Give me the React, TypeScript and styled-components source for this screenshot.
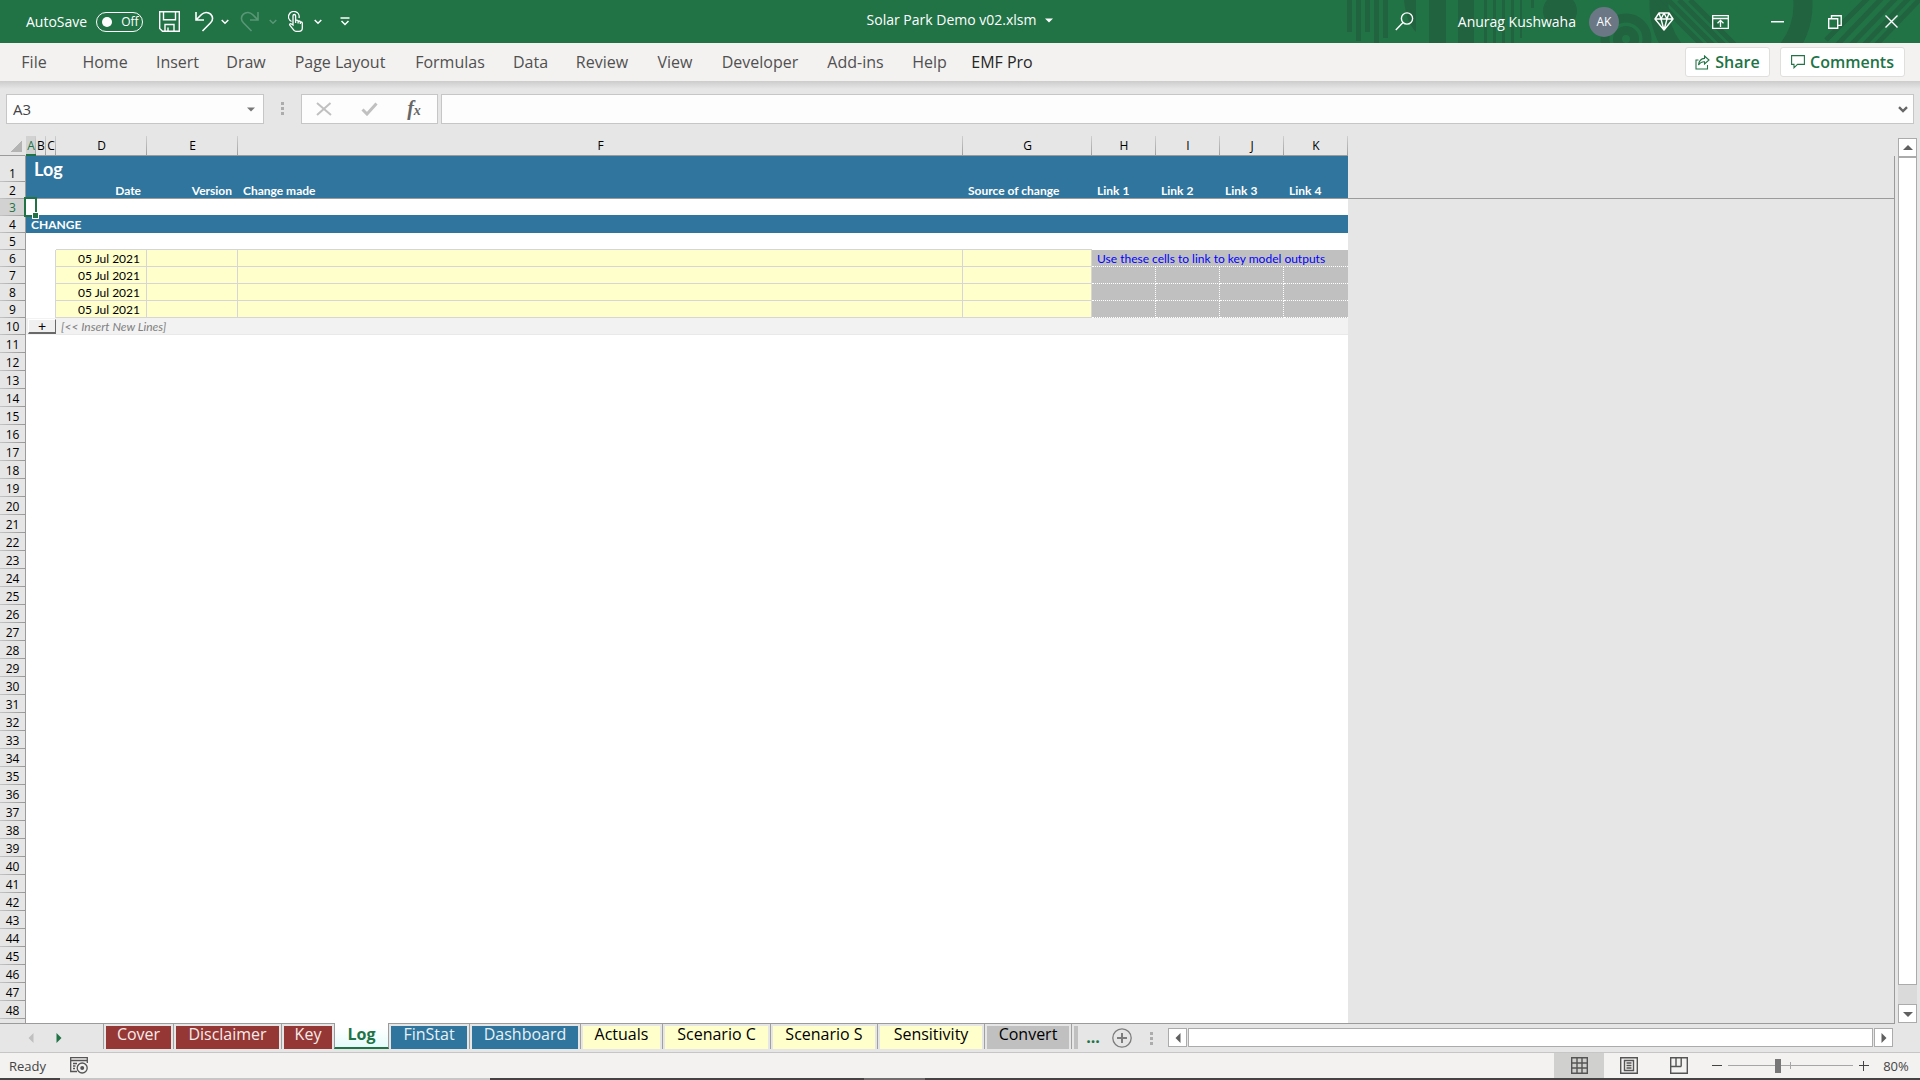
import React from "react";
import styled, { createGlobalStyle, css } from "styled-components";

const UI = `"Open Sans", "Noto Sans", "Liberation Sans", sans-serif`;
const CELL = `Lato, "Open Sans", "Liberation Sans", sans-serif`;
const GREEN = "#217346";
const BLUE = "#2f759d";
const LINE = "#9b9b9b";

const GlobalStyle = createGlobalStyle`
  *, *::before, *::after { box-sizing: border-box; }
  body { margin: 0; font-family: ${UI}; color: #444; }
  button, input { font-family: inherit; font-size: inherit; color: inherit; }
  button { margin: 0; padding: 0; border: 0; background: none; }
  svg { flex: none; }
`;

const Window = styled.div`
  display: flex;
  flex-direction: column;
  height: 100vh;
  overflow: hidden;
  background: #e6e6e6;
`;

/* ---------- title bar ---------- */
const TitleBar = styled.header`
  position: relative;
  display: grid;
  grid-template-columns: 1fr auto 1fr;
  flex: none;
  height: 43px;
  background: ${GREEN};
  color: #fff;
  font-size: 14px;
  line-height: 20px;
`;
const Pattern = styled.svg`
  position: absolute;
  top: 0;
  right: 0;
`;
const QuickAccess = styled.div`
  display: flex;
  align-items: center;
  padding-left: 26px;
`;
const AutoSave = styled.label`
  display: flex;
  align-items: center;
  gap: 9px;
  height: 40px;
  margin-right: 8px;
`;
const Switch = styled.span`
  display: flex;
  align-items: center;
  gap: 9px;
  width: 47px;
  height: 20px;
  padding-left: 5px;
  border: 1px solid #fff;
  border-radius: 10px;
  font-size: 12px;
`;
const Knob = styled.input`
  appearance: none;
  flex: none;
  width: 10px;
  height: 10px;
  margin: 0;
  border-radius: 50%;
  background: #fff;
`;
const QuickButton = styled.button<{ $w: number; $dim?: boolean }>`
  display: flex;
  align-items: center;
  justify-content: center;
  width: ${(p) => p.$w}px;
  height: 43px;
  opacity: ${(p) => (p.$dim ? 0.25 : 1)};
`;
const DocTitle = styled.button`
  display: flex;
  align-items: center;
  gap: 9px;
  height: 39px;
`;
const Account = styled.div`
  position: relative;
  display: flex;
  align-items: center;
  justify-content: flex-end;
`;
const UserName = styled.span`
  margin: 0 13px 0 34px;
`;
const Avatar = styled.span`
  width: 30px;
  height: 30px;
  margin-right: 16px;
  border-radius: 50%;
  background: #6b7785;
  font-size: 12px;
  line-height: 30px;
  text-align: center;
`;
const WindowButton = styled.button`
  display: flex;
  align-items: center;
  justify-content: center;
  width: 57px;
  height: 43px;
`;

/* ---------- ribbon ---------- */
const Ribbon = styled.nav`
  display: flex;
  align-items: center;
  flex: none;
  height: 38px;
  padding-right: 15px;
  background: #f3f2f1;
`;
const RibbonTab = styled.button<{ $w: number; $dark?: boolean }>`
  width: ${(p) => p.$w}px;
  height: 38px;
  font-size: 16px;
  line-height: 38px;
  white-space: nowrap;
  color: ${(p) => (p.$dark ? "#262626" : "#505050")};
`;
const RibbonActions = styled.div`
  display: flex;
  gap: 10px;
  margin-left: auto;
`;
const ActionButton = styled.button<{ $w: number }>`
  display: flex;
  align-items: center;
  justify-content: center;
  gap: 5px;
  width: ${(p) => p.$w}px;
  height: 30px;
  border: 1px solid #e1dfdd;
  border-radius: 3px;
  background: #fff;
  color: ${GREEN};
  font-size: 16px;
  font-weight: 600;
`;

/* ---------- formula bar ---------- */
const FormulaBar = styled.div`
  display: flex;
  align-items: flex-start;
  flex: none;
  height: 55px;
  padding: 13px 6px 0;
  background: linear-gradient(#cccccc, #e6e6e6 8px);
`;
const Box = styled.div<{ $w?: number }>`
  display: flex;
  align-items: center;
  flex: ${(p) => (p.$w ? "none" : "1")};
  width: ${(p) => (p.$w ? `${p.$w}px` : "auto")};
  height: 30px;
  border: 1px solid #c6c6c6;
  background: #fdfdfd;
`;
const BoxInput = styled.input`
  flex: 1;
  min-width: 0;
  height: 28px;
  padding: 0 6px;
  border: 0;
  outline: 0;
  background: transparent;
  font-size: 15px;
`;
const BoxButton = styled.button<{ $w: number }>`
  display: flex;
  align-items: center;
  justify-content: center;
  width: ${(p) => p.$w}px;
  height: 28px;
`;
const FxMark = styled.span`
  color: #666;
  font-family: "Liberation Serif", serif;
  font-size: 20px;
  font-style: italic;
  font-weight: 700;
  line-height: 24px;
  small { font-size: 14px; }
`;
const Grip = styled.span<{ $w: number }>`
  display: flex;
  flex-direction: column;
  align-items: center;
  align-self: flex-start;
  gap: 2px;
  width: ${(p) => p.$w}px;
  padding-top: 8px;
  &::before, &::after { content: ""; }
  &::before, &::after, & > i {
    width: 3px;
    height: 3px;
    background: #acacac;
  }
`;
const Spacer = styled.span`
  width: 3px;
`;

/* ---------- sheet ---------- */
const SheetArea = styled.main`
  display: flex;
  flex: 1;
  min-height: 0;
`;
const SheetPane = styled.div`
  flex: 1;
  min-width: 0;
  overflow: hidden;
  border-bottom: 1px solid ${LINE};
`;
const Sheet = styled.table`
  width: 100%;
  table-layout: fixed;
  border-collapse: separate;
  border-spacing: 0;
  font-family: ${CELL};
  font-size: 12px;
  line-height: 16px;
  color: #000;
  td, th { padding: 0; white-space: nowrap; }
`;
const Row = styled.tr<{ $h: number }>`
  height: ${(p) => p.$h}px;
`;
const Corner = styled.th`
  border-right: 1px solid transparent;
  border-bottom: 1px solid ${LINE};
  background: linear-gradient(135deg, transparent 50%, #b4b4b4 50%) 10px 4px / 12px 12px no-repeat;
`;
const ColHead = styled.th<{ $on?: boolean }>`
  border-bottom: 1px solid ${(p) => (p.$on ? GREEN : LINE)};
  background:
    linear-gradient(${GREEN}, ${GREEN}) bottom / ${(p) => (p.$on ? "100% 1px" : "0 0")} no-repeat,
    linear-gradient(#cfcfcf, #a0a0a0) right / 1px 100% no-repeat
    ${(p) => (p.$on ? "#d2d2d2" : "#e6e6e6")};
  color: ${(p) => (p.$on ? GREEN : "#000")};
  font-family: ${UI};
  font-size: 12px;
  font-weight: 400;
`;
const BlankHead = styled.td<{ $edge?: boolean }>`
  border-bottom: ${(p) => (p.$edge ? `1px solid ${LINE}` : "0")};
  border-right: 1px solid ${LINE};
`;
const RowHead = styled.th<{ $on?: boolean }>`
  border-right: 1px solid ${LINE};
  background: linear-gradient(90deg, #c4c4c4, #989898) bottom / 100% 1px no-repeat
    ${(p) => (p.$on ? "#d2d2d2" : "#e6e6e6")};
  color: ${(p) => (p.$on ? GREEN : "#000")};
  font-family: ${UI};
  font-size: 12px;
  font-weight: 400;
  line-height: 17px;
  vertical-align: bottom;
`;
const Cell = styled.td<{ $bg?: string; $line?: string }>`
  position: relative;
  background: ${(p) => p.$bg || "#fff"};
  ${(p) => p.$line && css`border-bottom: 1px solid ${p.$line};`}
`;
const Heading = styled(Cell)`
  color: #fff;
  font-weight: 700;
  text-align: left;
  vertical-align: bottom;
`;
const Label = styled.div<{ $end?: boolean }>`
  height: 15px;
  padding: 0 6px 0 5px;
  text-align: ${(p) => (p.$end ? "right" : "left")};
`;
const SheetTitle = styled.div`
  padding-left: 8px;
  font-size: 18px;
  line-height: 25px;
`;
const lowText = css`
  && { padding-top: 2px; }
  line-height: 14px;
`;
const Entry = styled(Cell)`
  border-right: 1px solid #d6d6d6;
  border-bottom: 1px solid #d6d6d6;
  background: #ffffcc;
  text-align: right;
  ${lowText}
  && { padding-right: 6px; }
`;
const EntryEdge = styled(Cell)<{ $side?: boolean }>`
  border-right: ${(p) => (p.$side ? "1px solid #d6d6d6" : "0")};
  border-bottom: ${(p) => (p.$side ? "0" : "1px solid #d6d6d6")};
`;
const LinkCell = styled(Cell)<{ $last?: boolean }>`
  border-right: ${(p) => (p.$last ? "0" : "1px dotted #fff")};
  border-bottom: 1px dotted #fff;
  background: #c0c0c0;
  color: #0000ff;
  ${lowText}
  && { padding-left: 5px; }
`;
const Note = styled(Cell)`
  border-bottom: 1px solid #e9e9e9;
  color: #808080;
  font-style: italic;
  ${lowText}
  && { padding-left: 5px; }
`;
const InsertButton = styled.button`
  display: block;
  width: 28px;
  height: 15px;
  margin-left: 2px;
  border: 1px solid;
  border-color: #fff #696969 #696969 #fff;
  border-bottom-width: 2px;
  background: #f0f0f0;
  color: #000;
  font-size: 14px;
  line-height: 12px;
`;
const Selection = styled.div`
  position: absolute;
  z-index: 1;
  top: -2px;
  left: -2px;
  width: 13px;
  height: 20px;
  border: 2px solid ${GREEN};
  &::after {
    content: "";
    position: absolute;
    right: -4px;
    bottom: -4px;
    width: 7px;
    height: 7px;
    border: 1px solid #fff;
    background: ${GREEN};
  }
`;

/* ---------- scroll bars ---------- */
const VScroll = styled.div`
  display: flex;
  flex-direction: column;
  width: 25px;
  padding: 2px 3px 1px;
`;
const ScrollButton = styled.button`
  display: flex;
  align-items: center;
  justify-content: center;
  flex: none;
  width: 19px;
  height: 19px;
  border: 1px solid #ababab;
  background: #fff;
`;
const VTrack = styled.div`
  flex: 1;
  padding-bottom: 19px;
  background: #dadada;
`;
const Thumb = styled.div`
  height: 100%;
  border: 1px solid #ababab;
  background: #fff;
`;
const HScroll = styled.div`
  display: flex;
  flex: 1;
  gap: 1px;
  height: 19px;
  margin: 4px 27px 0 0;
`;
const HTrack = styled.div`
  flex: 1;
`;

/* ---------- sheet tabs ---------- */
const TabBar = styled.div`
  display: flex;
  align-items: flex-start;
  flex: none;
  height: 29px;
  border-bottom: 1px solid #c6c6c6;
`;
const TabNav = styled.div`
  display: flex;
  flex: none;
  width: 103px;
  height: 28px;
  padding-left: 26px;
`;
const NavButton = styled.button`
  display: flex;
  align-items: center;
  width: 17px;
  height: 28px;
  margin-right: 11px;
`;
const TabSlot = styled.div<{ $bare?: boolean }>`
  padding: 2px 2px 0;
  border-left: ${(p) => (p.$bare ? "0" : "1px solid #a0a0a0")};
`;
const SheetTab = styled.button<{ $w: number; $bg: string; $fg: string }>`
  display: block;
  width: ${(p) => p.$w}px;
  height: 23px;
  background: ${(p) => p.$bg};
  color: ${(p) => p.$fg};
  font-size: 16px;
  line-height: 16px;
  padding-bottom: 7px;
`;
const ActiveTab = styled.button`
  position: relative;
  width: 55px;
  height: 26px;
  margin-top: -1px;
  padding-bottom: 3px;
  border: 1px solid ${LINE};
  border-top: 0;
  border-bottom: 2px solid ${GREEN};
  background: linear-gradient(#fff 20%, #e4fbfa);
  color: ${GREEN};
  font-size: 16px;
  font-weight: 700;
  line-height: 20px;
`;
const MoreTabs = styled.button`
  width: 26px;
  height: 26px;
  color: ${GREEN};
  font-size: 16px;
  font-weight: 700;
`;
const AddSheet = styled.button`
  display: flex;
  align-items: center;
  justify-content: center;
  width: 24px;
  height: 28px;
  margin-left: 4px;
`;

/* ---------- status bar ---------- */
const StatusBar = styled.footer`
  display: flex;
  align-items: center;
  flex: none;
  height: 27px;
  padding: 0 0 2px 9px;
  background:
    linear-gradient(90deg, #444 60px, #c6c6c6 60px, #c6c6c6 490px, #444 490px, #444 864px, #6e6e6e 864px, #6e6e6e 925px, #444 925px)
      bottom / 100% 2px no-repeat
    #f3f2f1;
  font-size: 13px;
`;
const StatusText = styled.span`
  width: 61px;
`;
const ViewButton = styled.button<{ $on?: boolean }>`
  display: flex;
  align-items: center;
  justify-content: center;
  width: 50px;
  height: 25px;
  background: ${(p) => (p.$on ? "#d0d0ce" : "transparent")};
`;
const Views = styled.div`
  display: flex;
  margin: 0 2px 0 auto;
`;
const ZoomButton = styled.button`
  display: flex;
  align-items: center;
  justify-content: center;
  width: 22px;
  height: 25px;
`;
const ZoomSlider = styled.input`
  appearance: none;
  width: 125px;
  height: 15px;
  margin: 0;
  background:
    linear-gradient(#a6a6a6, #a6a6a6) 0 7px / 100% 1px no-repeat,
    linear-gradient(#a6a6a6, #a6a6a6) 62px 4px / 1px 7px no-repeat;
  &::-webkit-slider-thumb {
    appearance: none;
    width: 6px;
    height: 14px;
    background: #777;
  }
`;
const ZoomValue = styled.button`
  width: 42px;
  margin-right: 3px;
`;

const Chevron = () => (
  <svg width="8" height="6" viewBox="0 0 8 6" fill="none" stroke="currentColor" strokeWidth="1.5">
    <path d="M.7 1 4 4.3 7.3 1" />
  </svg>
);

type Dir = "up" | "down" | "left" | "right";
const arrows: Record<Dir, string> = {
  up: "M0 7h10L5 2z",
  down: "M0 3h10L5 8z",
  left: "M7.500 0v10l-5-5z",
  right: "M2.500 0v10l5-5z",
};
const Arrow = ({ dir, color = "#606060", size = 10 }: { dir: Dir; color?: string; size?: number }) => (
  <svg width={size} height={size} viewBox="0 0 10 10" fill={color}>
    <path d={arrows[dir]} />
  </svg>
);

const TitlePattern = () => (
  <Pattern width="590" height="43" viewBox="1330 0 590 43" fill="#21633f" aria-hidden="true">
    <path d="M1347 0h5v32h-5zM1356 0h5v41h-5zM1365 0h5v32h-5zM1374 0h5v43h-5zM1383 0h5v38h-5z" />
    <path d="M1404 0h12v32q-10-10-12-32zM1429 0h17v43h-17zM1458 0h16v43h-16z" />
    <path d="M1484 0h3v43h-3zM1493 0h3v43h-3zM1502 0h3v43h-3zM1511 0h3v43h-3zM1520 0h2v38h-2zM1531 0h3v8h-3z" />
    <circle cx="1560" cy="11" r="17" />
    <g fill="none" stroke="#21633f">
      <circle cx="1626" cy="39" r="21" strokeWidth="9" />
      <circle cx="1626" cy="39" r="8.500" strokeWidth="9" />
      <circle cx="1731" cy="5" r="72" strokeWidth="19" />
      <path
        strokeWidth="5"
        d="M1668 0l46 46M1679 0l46 46M1690 0l46 46M1657 0l46 46M1826 40l43-43M1836 46l47-49M1848 48l49-51M1861 48l49-51M1873 48l49-51"
      />
    </g>
  </Pattern>
);

const ribbonTabs: [string, number][] = [
  ["File", 68], ["Home", 74], ["Insert", 71], ["Draw", 66], ["Page Layout", 122],
  ["Formulas", 98], ["Data", 63], ["Review", 80], ["View", 66], ["Developer", 104],
  ["Add-ins", 87], ["Help", 61], ["EMF Pro", 84],
];

const columns: [string, number][] = [
  ["A", 10], ["B", 10], ["C", 10], ["D", 91], ["E", 91], ["F", 725],
  ["G", 129], ["H", 64], ["I", 64], ["J", 64], ["K", 64],
];

const RED = "#953735";
const CREAM = "#ffffcc";
const leftTabs: [string, number][] = [["Cover", 65], ["Disclaimer", 103], ["Key", 48]];
const rightTabs: [string, number, string, string][] = [
  ["FinStat", 76, BLUE, "#e8f1f7"],
  ["Dashboard", 106, BLUE, "#e8f1f7"],
  ["Actuals", 77, CREAM, "#000"],
  ["Scenario C", 103, CREAM, "#000"],
  ["Scenario S", 102, CREAM, "#000"],
  ["Sensitivity", 102, CREAM, "#000"],
  ["Convert", 82, "#c0c0c0", "#000"],
];

const entryRows = [6, 7, 8, 9];
const emptyRows = Array.from({ length: 38 }, (_, i) => i + 11);

export default function App() {
  return (
    <Window>
      <GlobalStyle />
      <TitleBar>
        <TitlePattern />
        <QuickAccess>
          <AutoSave>
            AutoSave
            <Switch>
              <Knob type="checkbox" />
              Off
            </Switch>
          </AutoSave>
          <QuickButton $w={36} aria-label="Save">
            <svg width="21" height="21" viewBox="0 0 21 21" fill="none" stroke="#fff" strokeWidth="1.4">
              <path d="M.7.7h19.600v19.600H3.500L.7 17.500zM4.500.7v8h12v-8M6 20v-6.500h9V20M9 20v-3.500" />
            </svg>
          </QuickButton>
          <QuickButton $w={34} aria-label="Undo">
            <svg width="19" height="21" viewBox="0 0 19 21" fill="none" stroke="#fff" strokeWidth="1.600">
              <path d="M1 1v8h8M1.500 8.500 6.500 3.500C9 1 13 .7 15.600 3.200s2.600 5.800 0 8.500L7.500 20" />
            </svg>
          </QuickButton>
          <QuickButton $w={8} aria-label="Undo history"><Chevron /></QuickButton>
          <QuickButton $w={40} $dim aria-label="Redo">
            <svg width="19" height="21" viewBox="0 0 19 21" fill="none" stroke="#fff" strokeWidth="1.600">
              <path d="M18 1v8h-8M17.500 8.500 12.500 3.500C10 1 6 .7 3.400 3.200s-2.600 5.800 0 8.500L11.500 20" />
            </svg>
          </QuickButton>
          <QuickButton $w={8} $dim aria-label="Redo history"><Chevron /></QuickButton>
          <QuickButton $w={37} aria-label="Touch or mouse mode">
            <svg width="16" height="21" viewBox="0 0 16 21" fill="none" stroke="#fff" strokeWidth="1.300">
              <path d="M3.500 10.500A5.300 5.300 0 1 1 11 7M5 9V4.800a1.300 1.300 0 0 1 2.600 0V10M5 9v5l-2-1.200c-1-.4-1.800.8-1 1.600l4 5c.6.7 1 .9 2 .9h3c2 0 3.300-1.400 3.300-3.400v-5c0-1.200-2-1.200-2 0v-1c0-1.200-2.200-1.200-2.200 0V10c0-1.200-2.500-1.200-2.500 0v2M10.100 10v2.500M12.300 11v2" />
            </svg>
          </QuickButton>
          <QuickButton $w={8} aria-label="Touch options"><Chevron /></QuickButton>
          <QuickButton $w={46} aria-label="Customize toolbar">
            <svg width="10" height="9" viewBox="0 0 10 9" fill="none" stroke="#fff" strokeWidth="1.500">
              <path d="M.5 1h9M1.500 4 5 7.500 8.500 4" />
            </svg>
          </QuickButton>
        </QuickAccess>
        <DocTitle>
          Solar Park Demo v02.xlsm
          <Arrow dir="down" color="#fff" size={8} />
        </DocTitle>
        <Account>
          <QuickButton $w={38} aria-label="Search">
            <svg width="19" height="19" viewBox="0 0 19 19" fill="none" stroke="#fff" strokeWidth="1.400">
              <circle cx="12" cy="6.500" r="5.600" />
              <path d="M8 10.500.8 18" />
            </svg>
          </QuickButton>
          <UserName>Anurag Kushwaha</UserName>
          <Avatar>AK</Avatar>
          <WindowButton aria-label="Premium">
            <svg width="20" height="19" viewBox="0 0 20 19" fill="none" stroke="#fff" strokeWidth="1.400" strokeLinejoin="round">
              <path d="M5 1h10l4 6-9 11L1 7zM1 7h18M5 1l2 6 3 11 3-11 2-6M7 7l3-6 3 6" />
            </svg>
          </WindowButton>
          <WindowButton aria-label="Ribbon display options">
            <svg width="17" height="14" viewBox="0 0 17 14" fill="none" stroke="#fff" strokeWidth="1.300">
              <path d="M.7.7h15.600v12.600H.7zM.7 3.500h15.600M8.500 12V5.500M5.500 8.300l3-2.900 3 2.900" />
            </svg>
          </WindowButton>
          <WindowButton aria-label="Minimize">
            <svg width="13" height="2"><rect width="13" height="1.500" fill="#fff" /></svg>
          </WindowButton>
          <WindowButton aria-label="Restore">
            <svg width="14" height="14" viewBox="0 0 14 14" fill="none" stroke="#fff" strokeWidth="1.400">
              <path d="M.7 3.700h9v9.500h-9zM3.500 3.700V.8h9.700v9.600H9.700" />
            </svg>
          </WindowButton>
          <WindowButton aria-label="Close">
            <svg width="13" height="13" viewBox="0 0 13 13" stroke="#fff" strokeWidth="1.400">
              <path d="M.5.5l12 12M12.500.5l-12 12" />
            </svg>
          </WindowButton>
        </Account>
      </TitleBar>

      <Ribbon>
        {ribbonTabs.map(([name, w]) => (
          <RibbonTab key={name} $w={w} $dark={name === "EMF Pro"}>{name}</RibbonTab>
        ))}
        <RibbonActions>
          <ActionButton $w={85}>
            <svg width="15" height="15" viewBox="0 0 15 15" fill="none" stroke={GREEN} strokeWidth="1.100">
              <path d="M3.500 5H1v9h11.500v-4M9.500 1l4.500 4-4.500 4V6.700C7 6.500 5 7.500 3.500 10 4 6 6 3.600 9.500 3.400z" />
            </svg>
            Share
          </ActionButton>
          <ActionButton $w={125}>
            <svg width="14" height="14" viewBox="0 0 14 14" fill="none" stroke={GREEN} strokeWidth="1.100">
              <path d="M.6.6h12.800v8.800H6.500L3 12.800V9.400H.6z" />
            </svg>
            Comments
          </ActionButton>
        </RibbonActions>
      </Ribbon>

      <FormulaBar>
        <Box $w={258}>
          <BoxInput aria-label="Name box" defaultValue="A3" />
          <BoxButton $w={24} aria-label="Names"><Arrow dir="down" color="#777" size={8} /></BoxButton>
        </Box>
        <Grip $w={37}><i /></Grip>
        <Box $w={137}>
          <BoxButton $w={44} aria-label="Cancel">
            <svg width="16" height="14" viewBox="0 0 16 14" stroke="#c0c0c0" strokeWidth="2">
              <path d="M1 1l14 12M14.500 1 1 13" />
            </svg>
          </BoxButton>
          <BoxButton $w={46} aria-label="Enter">
            <svg width="17" height="14" viewBox="0 0 17 14" fill="none" stroke="#c0c0c0" strokeWidth="3">
              <path d="M1.500 7.500 6 12 15.500 1.500" />
            </svg>
          </BoxButton>
          <BoxButton $w={44} aria-label="Insert function">
            <FxMark>f<small>x</small></FxMark>
          </BoxButton>
        </Box>
        <Spacer />
        <Box>
          <BoxInput aria-label="Formula" />
          <BoxButton $w={20} aria-label="Expand formula bar">
            <svg width="10" height="7" viewBox="0 0 10 7" fill="none" stroke="#666" strokeWidth="2.400">
              <path d="M1 1.200 5 5l4-3.800" />
            </svg>
          </BoxButton>
        </Box>
      </FormulaBar>

      <SheetArea>
        <SheetPane>
          <Sheet>
            <colgroup>
              <col width="26" />
              {columns.map(([c, w]) => <col key={c} width={w} />)}
              <col />
            </colgroup>
            <thead>
              <Row $h={20}>
                <Corner aria-label="Select all" />
                {columns.map(([c]) => <ColHead key={c} $on={c === "A"}>{c}</ColHead>)}
                <td />
              </Row>
            </thead>
            <tbody>
              <Row $h={26}>
                <RowHead>1</RowHead>
                <Heading $bg={BLUE} colSpan={11}><SheetTitle>Log</SheetTitle></Heading>
                <BlankHead />
              </Row>
              <Row $h={17}>
                <RowHead>2</RowHead>
                <Heading $bg={BLUE} $line={LINE} colSpan={3} />
                <Heading $bg={BLUE} $line={LINE}><Label $end>Date</Label></Heading>
                <Heading $bg={BLUE} $line={LINE}><Label $end>Version</Label></Heading>
                <Heading $bg={BLUE} $line={LINE}><Label>Change made</Label></Heading>
                <Heading $bg={BLUE} $line={LINE}><Label>Source of change</Label></Heading>
                {[1, 2, 3, 4].map((n) => (
                  <Heading key={n} $bg={BLUE} $line={LINE}><Label>Link {n}</Label></Heading>
                ))}
                <BlankHead $edge />
              </Row>
              <Row $h={17}>
                <RowHead $on>3</RowHead>
                <Cell $line={BLUE}><Selection /></Cell>
                <Cell $line={BLUE} colSpan={10} />
                <BlankHead />
              </Row>
              <Row $h={17}>
                <RowHead>4</RowHead>
                <Heading $bg={BLUE} $line={BLUE} colSpan={11}><Label>CHANGE</Label></Heading>
                <BlankHead />
              </Row>
              <Row $h={17}>
                <RowHead>5</RowHead>
                <Cell colSpan={3} />
                <EntryEdge colSpan={4} />
                <Cell colSpan={4} />
                <BlankHead />
              </Row>
              {entryRows.map((n) => (
                <Row key={n} $h={17}>
                  <RowHead>{n}</RowHead>
                  <EntryEdge $side colSpan={3} />
                  <Entry>05 Jul 2021</Entry>
                  <Entry />
                  <Entry />
                  <Entry />
                  {n === 6 ? (
                    <LinkCell $last colSpan={4}>Use these cells to link to key model outputs</LinkCell>
                  ) : (
                    [0, 1, 2, 3].map((i) => <LinkCell key={i} $last={i === 3} />)
                  )}
                  <BlankHead />
                </Row>
              ))}
              <Row $h={17}>
                <RowHead>10</RowHead>
                <Cell $bg="#f2f2f2" colSpan={3}><InsertButton>+</InsertButton></Cell>
                <Note $bg="#f2f2f2" colSpan={8}>[&lt;&lt; Insert New Lines]</Note>
                <BlankHead />
              </Row>
              {emptyRows.map((n) => (
                <Row key={n} $h={18}>
                  <RowHead>{n}</RowHead>
                  <Cell colSpan={11} />
                  <BlankHead />
                </Row>
              ))}
              <Row $h={18}>
                <RowHead />
                <Cell colSpan={11} />
                <BlankHead />
              </Row>
            </tbody>
          </Sheet>
        </SheetPane>
        <VScroll>
          <ScrollButton aria-label="Scroll up"><Arrow dir="up" /></ScrollButton>
          <VTrack><Thumb /></VTrack>
          <ScrollButton aria-label="Scroll down"><Arrow dir="down" /></ScrollButton>
        </VScroll>
      </SheetArea>

      <TabBar>
        <TabNav>
          <NavButton aria-label="Previous sheets"><Arrow dir="left" color="#c0c0c0" /></NavButton>
          <NavButton aria-label="Next sheets"><Arrow dir="right" color={GREEN} /></NavButton>
        </TabNav>
        {leftTabs.map(([name, w]) => (
          <TabSlot key={name}><SheetTab $w={w} $bg={RED} $fg="#f7ebea">{name}</SheetTab></TabSlot>
        ))}
        <ActiveTab>Log</ActiveTab>
        {rightTabs.map(([name, w, bg, fg], i) => (
          <TabSlot key={name} $bare={i === 0}><SheetTab $w={w} $bg={bg} $fg={fg}>{name}</SheetTab></TabSlot>
        ))}
        <TabSlot><SheetTab $w={4} $bg="#c0c0c0" $fg="#000" aria-label="Next sheet" /></TabSlot>
        <MoreTabs aria-label="More sheets">...</MoreTabs>
        <AddSheet aria-label="New sheet">
          <svg width="20" height="20" viewBox="0 0 20 20" fill="none" stroke="#7d7d7d">
            <circle cx="10" cy="10" r="9.200" strokeWidth="1.300" />
            <path d="M10 5v10M5 10h10" strokeWidth="2" />
          </svg>
        </AddSheet>
        <Grip $w={34}><i /></Grip>
        <HScroll>
          <ScrollButton aria-label="Scroll left"><Arrow dir="left" /></ScrollButton>
          <HTrack><Thumb /></HTrack>
          <ScrollButton aria-label="Scroll right"><Arrow dir="right" /></ScrollButton>
        </HScroll>
      </TabBar>

      <StatusBar>
        <StatusText>Ready</StatusText>
        <svg width="18" height="17" viewBox="0 0 18 17" fill="none" stroke="#555" strokeWidth="1.300">
          <path d="M7 14.500H.7V.7h16.600V6M.7 3.500h16.600M3 6.500h4M3 9h2.500M3 11.500h2" />
          <circle cx="12.200" cy="11" r="5" />
          <circle cx="12.200" cy="11" r="2" fill="#555" stroke="none" />
        </svg>
        <Views>
          <ViewButton $on aria-label="Normal view">
            <svg width="17" height="17" viewBox="0 0 17 17" fill="none" stroke="#555" strokeWidth="1.400">
              <path d="M.7.7h15.600v15.600H.7zM6 .7v15.600M11 .7v15.600M.7 6h15.600M.7 11h15.600" />
            </svg>
          </ViewButton>
          <ViewButton aria-label="Page layout view">
            <svg width="18" height="17" viewBox="0 0 18 17" fill="none" stroke="#555" strokeWidth="1.400">
              <path d="M.7.7h16.600v15.600H.7zM4.500 3.500h9v10h-9zM6.500 6h5M6.500 8.500h5M6.500 11h5" />
            </svg>
          </ViewButton>
          <ViewButton aria-label="Page break preview">
            <svg width="18" height="17" viewBox="0 0 18 17" fill="none" stroke="#555" strokeWidth="1.400">
              <path d="M.7.7h16.600v15.600H.7zM.7 9.500h10.500M6 .7v8.800M11.200.7v8.800" />
            </svg>
          </ViewButton>
        </Views>
        <ZoomButton aria-label="Zoom out">
          <svg width="10" height="10" stroke="#444"><path d="M0 4.500h10" /></svg>
        </ZoomButton>
        <ZoomSlider type="range" aria-label="Zoom" min={0} max={200} defaultValue={79} />
        <ZoomButton aria-label="Zoom in">
          <svg width="10" height="10" stroke="#444"><path d="M0 4.500h10M4.500 0v10" /></svg>
        </ZoomButton>
        <ZoomValue>80%</ZoomValue>
      </StatusBar>
    </Window>
  );
}
